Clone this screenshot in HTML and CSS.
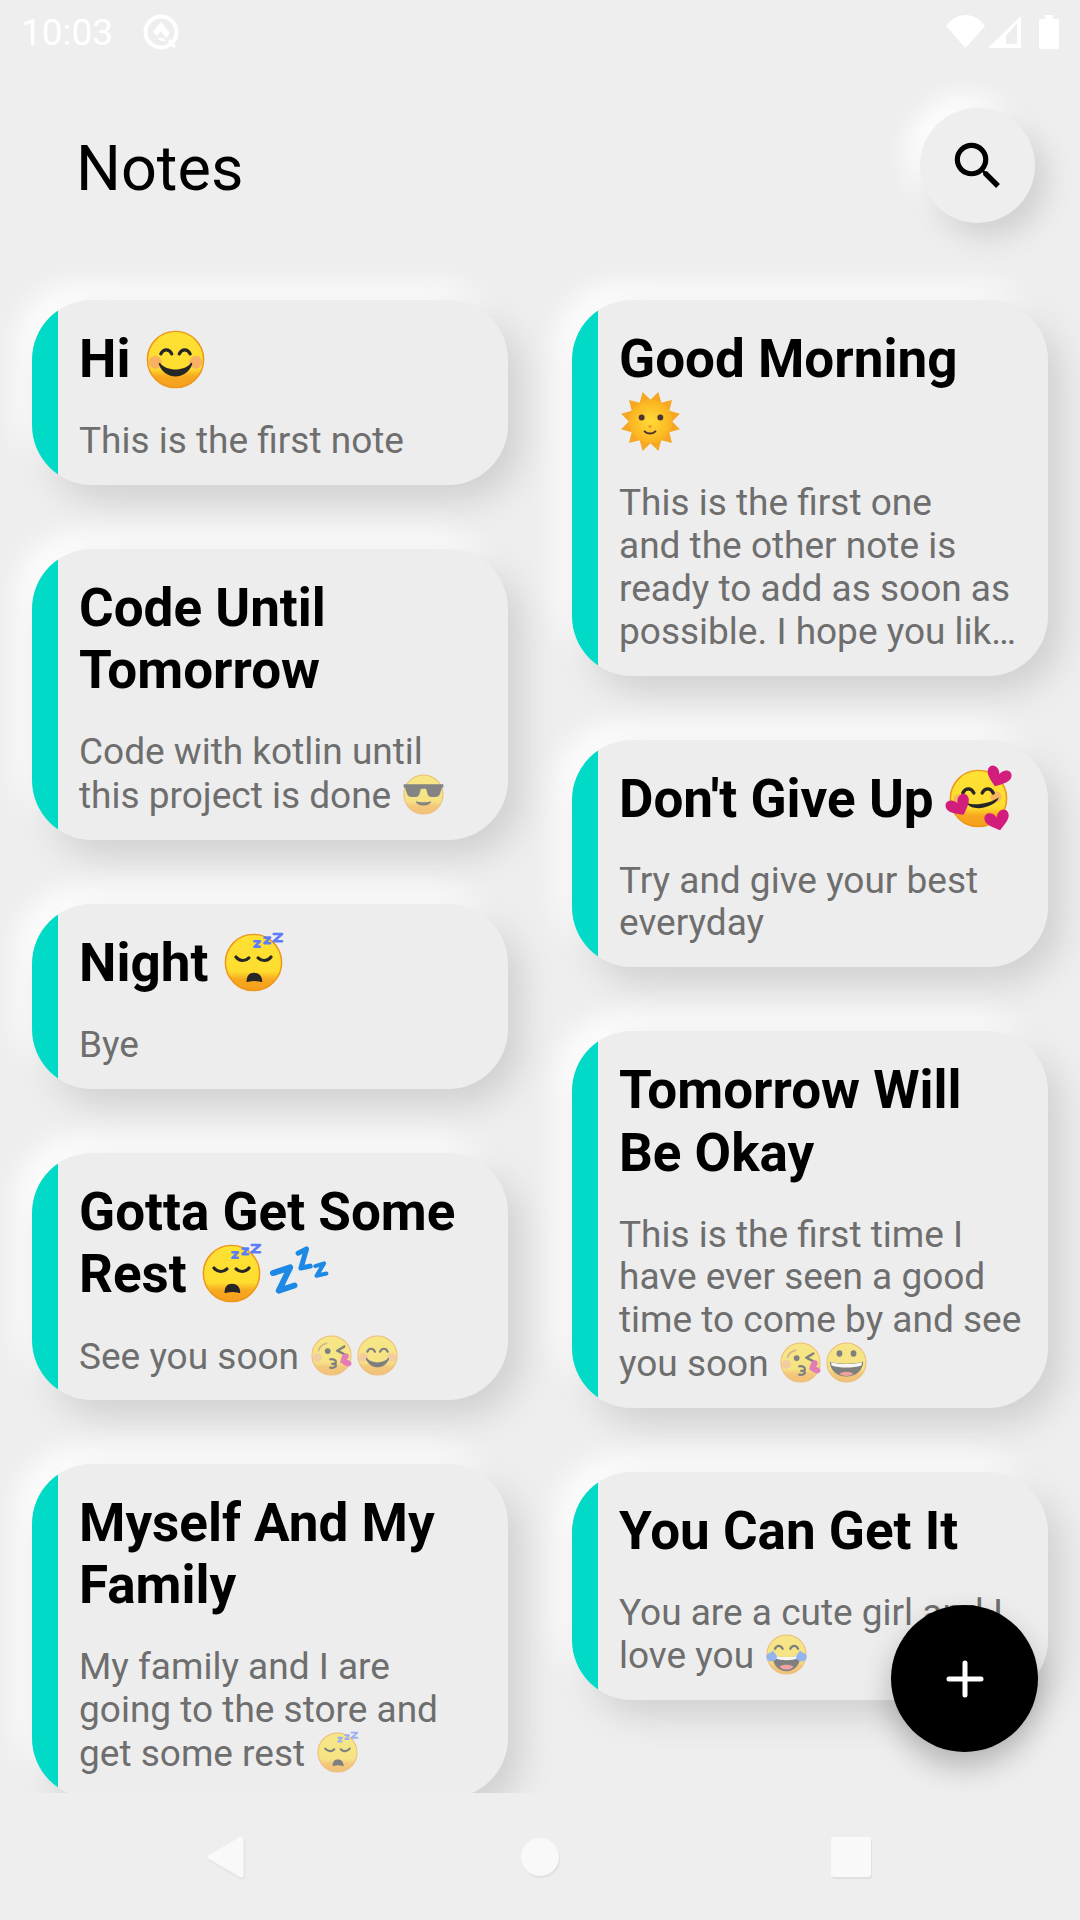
FILE: index.html
```html
<!DOCTYPE html>
<html lang="en">
<head>
  <meta charset="UTF-8" />
  <meta name="viewport" content="width=device-width, initial-scale=1.0"/>
  <title>Notes</title>
  <link rel="stylesheet" href="styles.css">
</head>
<body>

<!-- emoji drawings, used by the cards below -->
<svg class="sprite" xmlns="http://www.w3.org/2000/svg">
  <defs>
    <linearGradient id="face" x1="0" y1="0" x2="0" y2="1">
      <stop offset="0" stop-color="#fee133"/>
      <stop offset="0.66" stop-color="#fedd2f"/>
      <stop offset="0.8" stop-color="#f7a91f"/>
      <stop offset="1" stop-color="#f59e1c"/>
    </linearGradient>
    <radialGradient id="sunface">
      <stop offset="0" stop-color="#ffdc3a"/>
      <stop offset="1" stop-color="#fbb21f"/>
    </radialGradient>
    <path id="heart" d="M0 9C-3-1-15-3-17 6c-2 8 9 15 17 21C8 21 19 14 17 6 15-3 3-1 0 9z"/>
    <circle id="round" cx="32" cy="32" r="30.5" fill="url(#face)" stroke="#ee961a" stroke-width="1.6"/>
  </defs>

  <symbol id="e-smile" viewBox="0 0 64 64">
    <use href="#round"/>
    <circle cx="10" cy="35" r="7" fill="#f49a7c" opacity=".65"/>
    <circle cx="54" cy="35" r="7" fill="#f49a7c" opacity=".65"/>
    <path d="M16 26c3-6 9-6 12 0M36 26c3-6 9-6 12 0" fill="none" stroke="#262626" stroke-width="3.4" stroke-linecap="round"/>
    <path d="M15.500 36c7 9 26 9 33 0 1-1 2 0 1.500 1.500C47 46 39 50.500 32 50.500s-15-4.500-18-13c-.5-1.500.5-2.500 1.500-1.500z" fill="#262626"/>
  </symbol>

  <symbol id="e-sun" viewBox="2 2 60 60">
    <polygon points="32,10 40,2.1 43,12.9 53.9,10.1 51.1,21 61.9,24 54,32 61.9,40 51.1,43 53.9,53.9 43,51.1 40,61.9 32,54 24,61.9 21,51.1 10.1,53.9 12.9,43 2.1,40 10,32 2.1,24 12.9,21 10.1,10.1 21,12.9 24,2.1" fill="#f6a724"/>
    <circle cx="32" cy="32" r="22" fill="url(#sunface)"/>
    <circle cx="23" cy="28" r="3" fill="#4e342e"/>
    <circle cx="42" cy="28" r="3" fill="#4e342e"/>
    <path d="M29 36h5l-2.500 3z" fill="#f18f1e"/>
    <path d="M26 42c3 3 8 3 11 0" fill="none" stroke="#4e342e" stroke-width="2" stroke-linecap="round"/>
  </symbol>

  <symbol id="e-shades" viewBox="0 0 64 64">
    <use href="#round"/>
    <path d="M1 16h62v5h-2l-3 9c-1 4-4 6-8 6h-5c-4 0-6-2-7-6l-2-7h-8l-2 7c-1 4-3 6-7 6h-5c-4 0-7-2-8-6L3 21H1z" fill="#2f2f2f"/>
    <path d="M20 42c7 3 17 3 24 0 0 4-5 7-12 7s-12-3-12-7z" fill="#2f2f2f"/>
  </symbol>

  <symbol id="e-hearts" viewBox="0 0 64 64">
    <use href="#round"/>
    <circle cx="11" cy="33" r="6" fill="#f49a7c" opacity=".6"/>
    <circle cx="51" cy="30" r="6" fill="#f49a7c" opacity=".6"/>
    <path d="M15 26c3-6 9-6 12 0M36 26c3-6 9-6 12 0" fill="none" stroke="#262626" stroke-width="3.6" stroke-linecap="round"/>
    <path d="M19 37c10 3 24 1 35-6-3 10-28 17-35 6z" fill="#262626"/>
    <g fill="#d21d7c">
      <use href="#heart" transform="translate(57 -1) rotate(20) scale(.78)"/>
      <use href="#heart" transform="translate(6 31) rotate(-28) scale(.78)"/>
      <use href="#heart" transform="translate(50 46) rotate(-15) scale(.78)"/>
    </g>
  </symbol>

  <symbol id="e-sleep" viewBox="0 0 64 64">
    <use href="#round"/>
    <path d="M13 26c4 5 10 5 14 1M37 27c4 4 10 4 14-1" fill="none" stroke="#262626" stroke-width="3.400" stroke-linecap="round"/>
    <path d="M24.500 53c0-7 3-10 8-10s9 3 9 10c0 1-3-1-8.500-1s-8.500 2-8.500 1z" fill="#262626"/>
    <path d="M33 9h6l-6 6h6M44 5h6l-6 6h6M54 1h9l-9 8h9" fill="none" stroke="#5c7cfa" stroke-width="2.800" stroke-linejoin="round" stroke-linecap="round"/>
  </symbol>

  <symbol id="e-zzz" viewBox="0 0 64 64">
    <g fill="none" stroke="#1e88e5" stroke-linejoin="round" stroke-linecap="round">
      <path d="M8.600 31.500L27.300 25.300 15 50.600 32 45" stroke-width="6.500"/>
      <path d="M35.900 10L45 5.400 39 26 49 24" stroke-width="5.500"/>
      <path d="M54.600 24L64 21 56 34.400 66.500 32" stroke-width="4.500"/>
    </g>
  </symbol>

  <symbol id="e-kiss" viewBox="0 0 64 64">
    <use href="#round"/>
    <circle cx="10" cy="35" r="7" fill="#f49a7c" opacity=".65"/>
    <path d="M12 24c1-5 5-9 12-11" fill="none" stroke="#c98a3a" stroke-width="3" stroke-linecap="round"/>
    <circle cx="26" cy="25" r="4.500" fill="#262626"/>
    <path d="M52 18l-11 6.500 11 5.500" fill="none" stroke="#262626" stroke-width="3.800" stroke-linecap="round" stroke-linejoin="round"/>
    <path d="M30 38c5-1 9 1 9 4s-4 3-6 3c3 0 6 1 6 3s-5 4-9 3" fill="none" stroke="#262626" stroke-width="3.400" stroke-linecap="round" stroke-linejoin="round"/>
    <use href="#heart" transform="translate(61 37) rotate(70) scale(.62)" fill="#dc1f8a"/>
  </symbol>

  <symbol id="e-grin" viewBox="0 0 64 64">
    <use href="#round"/>
    <ellipse cx="21" cy="18" rx="4.500" ry="5" fill="#262626"/>
    <ellipse cx="43" cy="18" rx="4.500" ry="5" fill="#262626"/>
    <path d="M6 31c14 4 38 4 52 0 0 14-12 23-26 23S6 45 6 31z" fill="#262626"/>
    <path d="M8 31.500c14 4 34 4 48 0l-.5 5c-14 4.500-33 4.500-47 0z" fill="#fff"/>
    <path d="M21 50c6-5 16-5 22 0-6 4-16 4-22 0z" fill="#f2685f"/>
  </symbol>

  <symbol id="e-joy" viewBox="0 0 64 64">
    <use href="#round"/>
    <path d="M14 23c3-6 9-6 12 0M38 23c3-6 9-6 12 0" fill="none" stroke="#262626" stroke-width="3.600" stroke-linecap="round"/>
    <path d="M10 33c14 4 30 4 44 0 0 15-10 25-22 25S10 48 10 33z" fill="#262626"/>
    <path d="M12 33c13 4 27 4 40 0l-1 5c-12 4-26 4-38 0z" fill="#fff"/>
    <path d="M21 51c6-4 16-4 22 0-6 6-16 6-22 0z" fill="#f2685f"/>
    <path d="M11 26c2 3 7 7 6 11-1 5-8 7-12 5-5-2-6-8-2-11 3-2 6-3 8-5zM53 26c-2 3-7 7-6 11 1 5 8 7 12 5 5-2 6-8 2-11-3-2-6-3-8-5z" fill="#4f86f0"/>
  </symbol>
</svg>

<div class="app">

  <div class="status-bar">
    <div class="status-left">
      <span class="clock">10:03</span>
      <svg class="status-app" viewBox="0 0 36 36">
        <circle cx="18" cy="18" r="15.500" fill="none" stroke="#fff" stroke-width="4"/>
        <path d="M27 27l4 5" stroke="#fff" stroke-width="3.500" stroke-linecap="round"/>
        <path d="M18 8l9 11-4 5-5-7-4 5-4-4z" fill="#fff"/>
        <path d="M14 24h6l3 3h-5z" fill="#fff"/>
      </svg>
    </div>
    <div class="status-right">
      <svg class="status-wifi" viewBox="0 0 39 33"><path d="M0 11C5 4 12 0 19.500 0S34 4 39 11L19.500 33z" fill="#fff"/></svg>
      <svg class="status-signal" viewBox="0 0 33 32"><path d="M33 0v32H0zM29 7L18 20v8h11z" fill="#fff" fill-rule="evenodd"/></svg>
      <svg class="status-battery" viewBox="0 0 20 34"><path d="M6 0h8v4h4a2 2 0 0 1 2 2v26a2 2 0 0 1-2 2H2a2 2 0 0 1-2-2V6a2 2 0 0 1 2-2h4z" fill="#fff"/></svg>
    </div>
  </div>

  <header class="top">
    <h1>Notes</h1>
    <button class="search-btn" type="button" aria-label="Search">
      <svg viewBox="0 0 24 24"><path d="M15.500 14h-.79l-.28-.27A6.470 6.470 0 0 0 16 9.500 6.500 6.500 0 1 0 9.500 16c1.610 0 3.090-.59 4.230-1.570l.27.28v.79l5 4.990L20.490 19l-4.990-5zm-6 0C7.010 14 5 11.990 5 9.500S7.010 5 9.500 5 14 7.010 14 9.500 11.990 14 9.500 14z"/></svg>
    </button>
  </header>

  <main class="list">
    <div class="column">
      <article class="note">
        <div class="note-bar"></div>
        <div class="note-body">
          <h2>Hi <svg class="emoji"><use href="#e-smile"/></svg></h2>
          <p>This is the first note</p>
        </div>
      </article>
      <article class="note">
        <div class="note-bar"></div>
        <div class="note-body">
          <h2>Code Until<br>Tomorrow</h2>
          <p>Code with kotlin until<br>this project is done <svg class="emoji"><use href="#e-shades"/></svg></p>
        </div>
      </article>
      <article class="note">
        <div class="note-bar"></div>
        <div class="note-body">
          <h2>Night <svg class="emoji"><use href="#e-sleep"/></svg></h2>
          <p>Bye</p>
        </div>
      </article>
      <article class="note">
        <div class="note-bar"></div>
        <div class="note-body">
          <h2>Gotta Get Some<br>Rest <svg class="emoji"><use href="#e-sleep"/></svg><svg class="emoji"><use href="#e-zzz"/></svg></h2>
          <p>See you soon <svg class="emoji"><use href="#e-kiss"/></svg><svg class="emoji"><use href="#e-smile"/></svg></p>
        </div>
      </article>
      <article class="note">
        <div class="note-bar"></div>
        <div class="note-body">
          <h2>Myself And My<br>Family</h2>
          <p>My family and I are<br>going to the store and<br>get some rest <svg class="emoji"><use href="#e-sleep"/></svg></p>
        </div>
      </article>
    </div>

    <div class="column">
      <article class="note">
        <div class="note-bar"></div>
        <div class="note-body">
          <h2>Good Morning<br><svg class="emoji"><use href="#e-sun"/></svg></h2>
          <p>This is the first one<br>and the other note is<br>ready to add as soon as<br>possible. I hope you lik&hellip;</p>
        </div>
      </article>
      <article class="note">
        <div class="note-bar"></div>
        <div class="note-body">
          <h2>Don't Give Up <svg class="emoji"><use href="#e-hearts"/></svg></h2>
          <p>Try and give your best<br>everyday</p>
        </div>
      </article>
      <article class="note">
        <div class="note-bar"></div>
        <div class="note-body">
          <h2>Tomorrow Will<br>Be Okay</h2>
          <p>This is the first time I<br>have ever seen a good<br>time to come by and see<br>you soon <svg class="emoji"><use href="#e-kiss"/></svg><svg class="emoji"><use href="#e-grin"/></svg></p>
        </div>
      </article>
      <article class="note">
        <div class="note-bar"></div>
        <div class="note-body">
          <h2>You Can Get It</h2>
          <p>You are a cute girl and I<br>love you <svg class="emoji"><use href="#e-joy"/></svg></p>
        </div>
      </article>
    </div>
  </main>

  <button class="fab" type="button" aria-label="Add note">
    <svg viewBox="0 0 38 38"><path d="M19 3v32M3 19h32" fill="none" stroke="#fff" stroke-width="5" stroke-linecap="round"/></svg>
  </button>

  <nav class="nav-bar">
    <svg class="nav-back" viewBox="0 0 37 42"><path d="M34.500 2.500v37L2.500 21z" fill="#f9f9f9" stroke="#f9f9f9" stroke-width="4" stroke-linejoin="round"/></svg>
    <div class="nav-home"></div>
    <div class="nav-recent"></div>
  </nav>

</div>

</body>
</html>
```

FILE: styles.css
```css
* {
  box-sizing: border-box;
}

body {
  margin: 0;
  font-family: Roboto, sans-serif;
  background-color: #eeeeee;
}

.sprite {
  position: absolute;
  width: 0;
  height: 0;
}

symbol {
  overflow: visible;
}

.app {
  position: relative;
  display: flex;
  flex-direction: column;
  width: 1080px;
  height: 1920px;
  overflow: hidden;
}

/* status bar */
.status-bar {
  display: flex;
  justify-content: space-between;
  align-items: center;
  height: 63px;
  padding: 0 21px 0 21px;
  color: #fff;
}

.status-left,
.status-right {
  display: flex;
  align-items: center;
}

.clock {
  padding-top: 1px;
  font-size: 37px;
}

.status-app {
  width: 36px;
  height: 36px;
  margin-left: 30px;
}

.status-wifi {
  width: 39px;
  height: 33px;
}

.status-signal {
  width: 33px;
  height: 32px;
  margin-left: 3px;
}

.status-battery {
  width: 20px;
  height: 34px;
  margin-left: 18px;
}

/* header */
.top {
  display: flex;
  justify-content: space-between;
  align-items: center;
  padding: 45px 45px 0 76px;
}

.top h1 {
  margin: 0;
  padding-top: 6px;
  font-size: 63px;
  font-weight: 400;
  color: #000;
}

.search-btn {
  display: flex;
  justify-content: center;
  align-items: center;
  width: 115px;
  height: 115px;
  padding: 0;
  border: none;
  border-radius: 50%;
  background: #eeeeee;
  box-shadow: 12px 14px 28px #d0d0d0, -12px -12px 26px #fff;
}

.search-btn svg {
  width: 62px;
  height: 62px;
}

/* note list */
.list {
  display: flex;
  justify-content: space-between;
  flex: 1;
  min-height: 0;
  padding: 77px 32px 0;
  overflow: hidden;
}

.column {
  display: flex;
  flex-direction: column;
  gap: 64px;
  width: 476px;
}

.note {
  display: flex;
  flex-shrink: 0;
  border-radius: 60px;
  overflow: hidden;
  background: #ededed;
  box-shadow: 14px 16px 34px #d0d0d0, -14px -14px 30px #fff;
}

.note-bar {
  flex-shrink: 0;
  width: 26px;
  background: #00dac6;
}

.note-body {
  flex: 1;
  padding: 28px 10px 22.200px 21px;
}

.note h2 {
  margin: 0;
  font-size: 53px;
  line-height: 62.100px;
  font-weight: 700;
  color: #000;
  white-space: nowrap;
}

.note p {
  margin: 30px 0 0;
  font-size: 37px;
  line-height: 42.800px;
  color: #6e6e6e;
  white-space: nowrap;
}

.emoji {
  overflow: visible;
}

.note h2 .emoji {
  width: 59px;
  height: 59px;
  margin: 0 2px;
  vertical-align: -11.500px;
}

.note p .emoji {
  width: 41px;
  height: 41px;
  margin: 0 2.500px;
  vertical-align: -7.500px;
  opacity: 0.55;
}

/* add button */
.fab {
  position: absolute;
  top: 1605px;
  left: 891px;
  display: flex;
  justify-content: center;
  align-items: center;
  width: 147px;
  height: 147px;
  padding: 0;
  border: none;
  border-radius: 50%;
  background: #000;
  box-shadow: 0 14px 30px rgba(0, 0, 0, 0.25);
}

.fab svg {
  width: 38px;
  height: 38px;
}

/* navigation bar */
.nav-bar {
  display: flex;
  justify-content: space-between;
  align-items: center;
  height: 127px;
  padding: 0 209px 0 207px;
}

.nav-back {
  width: 37px;
  height: 42px;
  filter: drop-shadow(1px 2px 1px #e0e0e0);
}

.nav-home {
  width: 38px;
  height: 38px;
  margin-left: 5px;
  border-radius: 50%;
  background: #f9f9f9;
  box-shadow: 1px 2px 1px #e0e0e0;
}

.nav-recent {
  width: 40px;
  height: 40px;
  border-radius: 3px;
  background: #f9f9f9;
  box-shadow: 1px 2px 1px #e0e0e0;
}
```
